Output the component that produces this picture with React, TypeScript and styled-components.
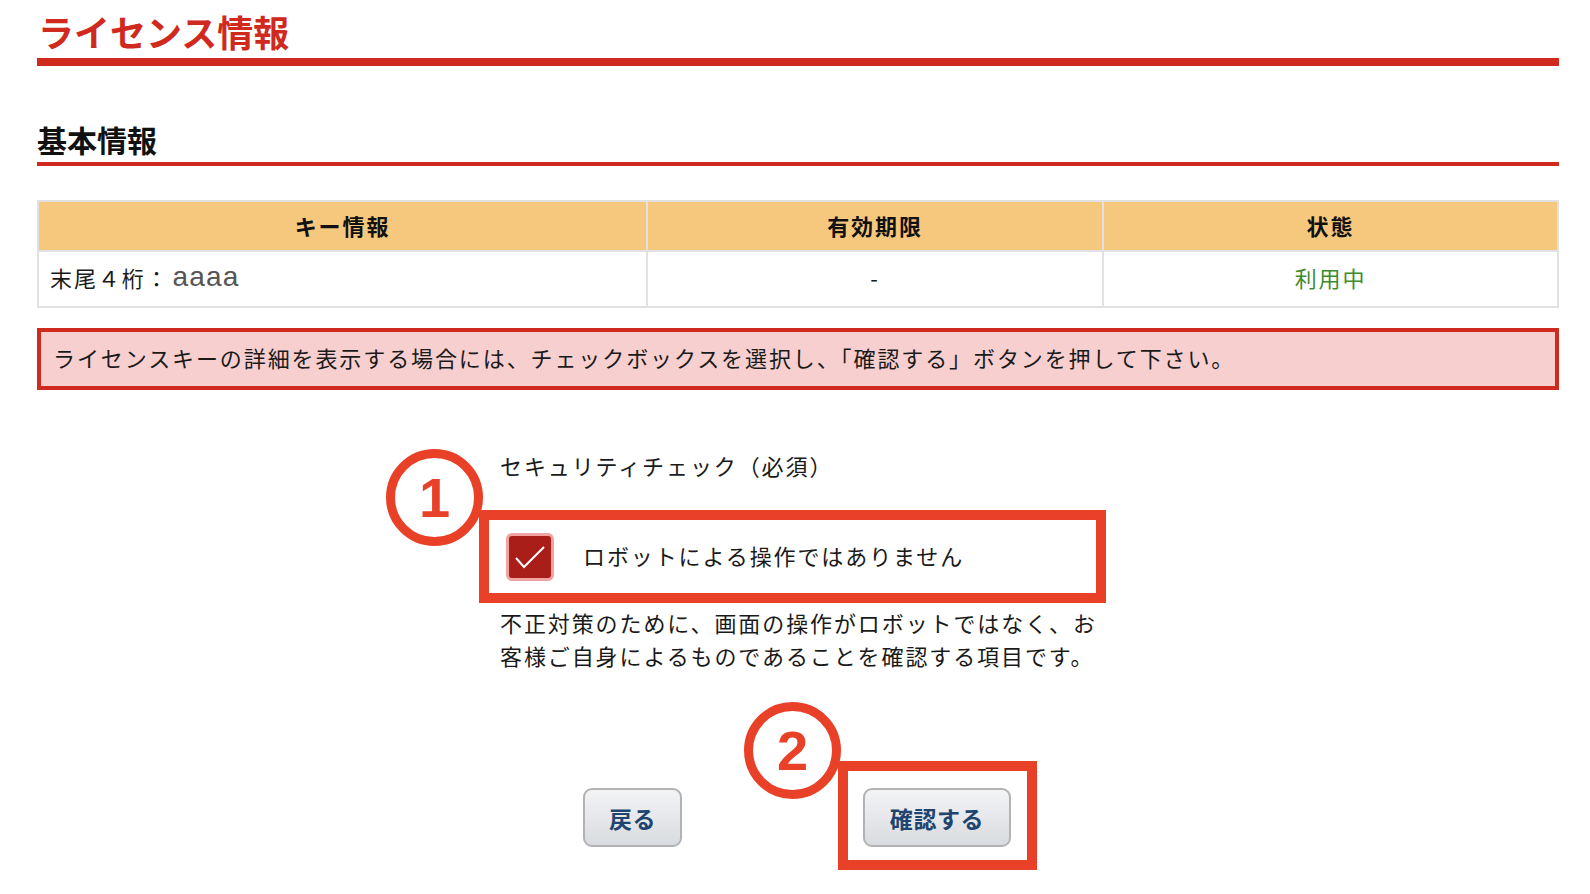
import React from 'react';
import styled, { createGlobalStyle } from 'styled-components';

const GlobalStyle = createGlobalStyle`
  html, body {
    background: #fff;
    margin: 0;
    padding: 0;
  }

  body {
    color: #1a1a1a;
    font-family: "Noto Sans CJK JP", "Noto Sans", sans-serif;
  }

  * {
    box-sizing: border-box;
  }
`;

const PAGE_RED = '#d0291e';
const MARK_RED = '#e94028';

const StyledPage = styled.div`
  padding: 7px 0 40px 37px;
`;

const StyledContent = styled.div`
  width: 1522px;
`;

const StyledTitle = styled.h1`
  border-bottom: 8px solid ${PAGE_RED};
  color: ${PAGE_RED};
  font-size: 36px;
  font-weight: 700;
  line-height: 48px;
  margin: 0;
  padding: 0 0 3px 1px;
`;

const StyledSection = styled.h2`
  border-bottom: 4px solid ${PAGE_RED};
  color: #111;
  font-size: 30px;
  font-weight: 700;
  line-height: 40px;
  margin: 53px 0 0;
  padding: 0 0 3px;
`;

const StyledTable = styled.div`
  background: #e1e1e1;
  display: grid;
  gap: 2px;
  grid-template-columns: 607px 454px 1fr;
  margin: 34px 0 0;
  padding: 2px;
`;

const StyledHeadCell = styled.div`
  align-items: center;
  background: #f6c87e;
  color: #111;
  display: flex;
  font-size: 22px;
  font-weight: 700;
  height: 48px;
  justify-content: center;
  letter-spacing: 1.9px;
  padding: 0 0 3px;
`;

const StyledCell = styled.div<{ $align?: 'left' | 'center'; $color?: string }>`
  align-items: center;
  background: #fff;
  color: ${({ $color }) => $color || '#1a1a1a'};
  display: flex;
  font-size: 22px;
  height: 54px;
  justify-content: ${({ $align }) => ($align === 'left' ? 'flex-start' : 'center')};
  letter-spacing: 1.9px;
  padding: 0 11px 4px;
`;

const StyledKeyValue = styled.span`
  color: #555;
  font-family: "Liberation Sans", Arial, sans-serif;
  font-size: 28px;
  letter-spacing: 1.2px;
  margin: 0 0 0 3px;
`;

const StyledNotice = styled.div`
  align-items: center;
  background: #f7cfcf;
  border: 4px solid ${PAGE_RED};
  display: flex;
  font-size: 22px;
  height: 62px;
  letter-spacing: 1.9px;
  margin: 20px 0 0;
  padding: 0 12px 4px;
`;

const StyledSecurity = styled.div`
  margin: 59px 0 0 463px;
  position: relative;
  width: 600px;
`;

const StyledLabel = styled.div`
  font-size: 22px;
  letter-spacing: 1.9px;
  line-height: 32px;
  padding: 0 0 2px;
`;

const StyledCheckRow = styled.div`
  align-items: center;
  display: flex;
  gap: 29px;
  height: 73px;
  margin: 37px 0 0;
  padding: 0 0 0 6px;
  position: relative;
`;

const StyledCheckbox = styled.span`
  align-items: center;
  background: #a91e18;
  border: 3px solid #f0a3a1;
  border-radius: 6px;
  display: flex;
  flex-shrink: 0;
  height: 48px;
  justify-content: center;
  width: 48px;

  & svg {
    display: block;
  }
`;

const StyledCheckText = styled.span`
  font-size: 22px;
  letter-spacing: 1.9px;
  margin: -4px 0 0;
`;

const StyledDescription = styled.p`
  font-size: 22px;
  letter-spacing: 1.9px;
  line-height: 33px;
  margin: 13px 0 0;
  padding: 0 0 3px;
`;

const StyledButtons = styled.div`
  align-items: center;
  display: flex;
  gap: 181px;
  justify-content: center;
  margin: 113px 0 0;
  padding: 0 6px 0 0;
`;

const StyledButton = styled.button<{ $width: number }>`
  background: linear-gradient(#f3f4f6, #d8dbdf);
  border: 2px solid #b3b3b3;
  border-radius: 9px;
  color: #1f4470;
  cursor: pointer;
  font-family: "Noto Sans CJK JP", sans-serif;
  font-size: 23px;
  font-weight: 700;
  height: 59px;
  letter-spacing: 0.6px;
  padding: 0;
  width: ${({ $width }) => $width}px;
`;

const StyledMarked = styled.span`
  display: inline-block;
  position: relative;
`;

const StyledFrame = styled.span<{ $t: number; $r: number; $b: number; $l: number }>`
  border: 10px solid ${MARK_RED};
  bottom: ${({ $b }) => $b}px;
  left: ${({ $l }) => $l}px;
  pointer-events: none;
  position: absolute;
  right: ${({ $r }) => $r}px;
  top: ${({ $t }) => $t}px;
`;

const StyledBadge = styled.span<{ $top: number; $left: number }>`
  align-items: center;
  border: 9px solid ${MARK_RED};
  border-radius: 50%;
  color: ${MARK_RED};
  display: flex;
  font-family: "Liberation Sans", Arial, sans-serif;
  font-size: 56px;
  font-weight: 700;
  height: 97px;
  justify-content: center;
  left: ${({ $left }) => $left}px;
  line-height: 1;
  pointer-events: none;
  position: absolute;
  top: ${({ $top }) => $top}px;
  width: 97px;
`;

export default function App() {
  return (
    <StyledPage>
      <GlobalStyle />
      <StyledContent>
        <StyledTitle>ライセンス情報</StyledTitle>
        <StyledSection>基本情報</StyledSection>

        <StyledTable>
          <StyledHeadCell>キー情報</StyledHeadCell>
          <StyledHeadCell>有効期限</StyledHeadCell>
          <StyledHeadCell>状態</StyledHeadCell>
          <StyledCell $align="left">
            末尾４桁：<StyledKeyValue>aaaa</StyledKeyValue>
          </StyledCell>
          <StyledCell>-</StyledCell>
          <StyledCell $color="#3d8c2c">利用中</StyledCell>
        </StyledTable>

        <StyledNotice>
          ライセンスキーの詳細を表示する場合には、チェックボックスを選択し、「確認する」ボタンを押して下さい。
        </StyledNotice>

        <StyledSecurity>
          <StyledBadge $top={0} $left={-114}>1</StyledBadge>
          <StyledLabel>セキュリティチェック（必須）</StyledLabel>

          <StyledCheckRow>
            <StyledCheckbox>
              <svg width="42" height="42" viewBox="0 0 42 42">
                <polyline points="7,22 15,31 35,11" fill="none" stroke="#fff" strokeWidth="2" />
              </svg>
            </StyledCheckbox>
            <StyledCheckText>ロボットによる操作ではありません</StyledCheckText>
            <StyledFrame $t={-10} $r={-6} $b={-10} $l={-21} />
          </StyledCheckRow>

          <StyledDescription>
            不正対策のために、画面の操作がロボットではなく、お
            <br />
            客様ご自身によるものであることを確認する項目です。
          </StyledDescription>

          <StyledButtons>
            <StyledButton $width={99}>戻る</StyledButton>
            <StyledMarked>
              <StyledBadge $top={-86} $left={-119}>2</StyledBadge>
              <StyledButton $width={148}>確認する</StyledButton>
              <StyledFrame $t={-27} $r={-26} $b={-23} $l={-25} />
            </StyledMarked>
          </StyledButtons>
        </StyledSecurity>
      </StyledContent>
    </StyledPage>
  );
}
